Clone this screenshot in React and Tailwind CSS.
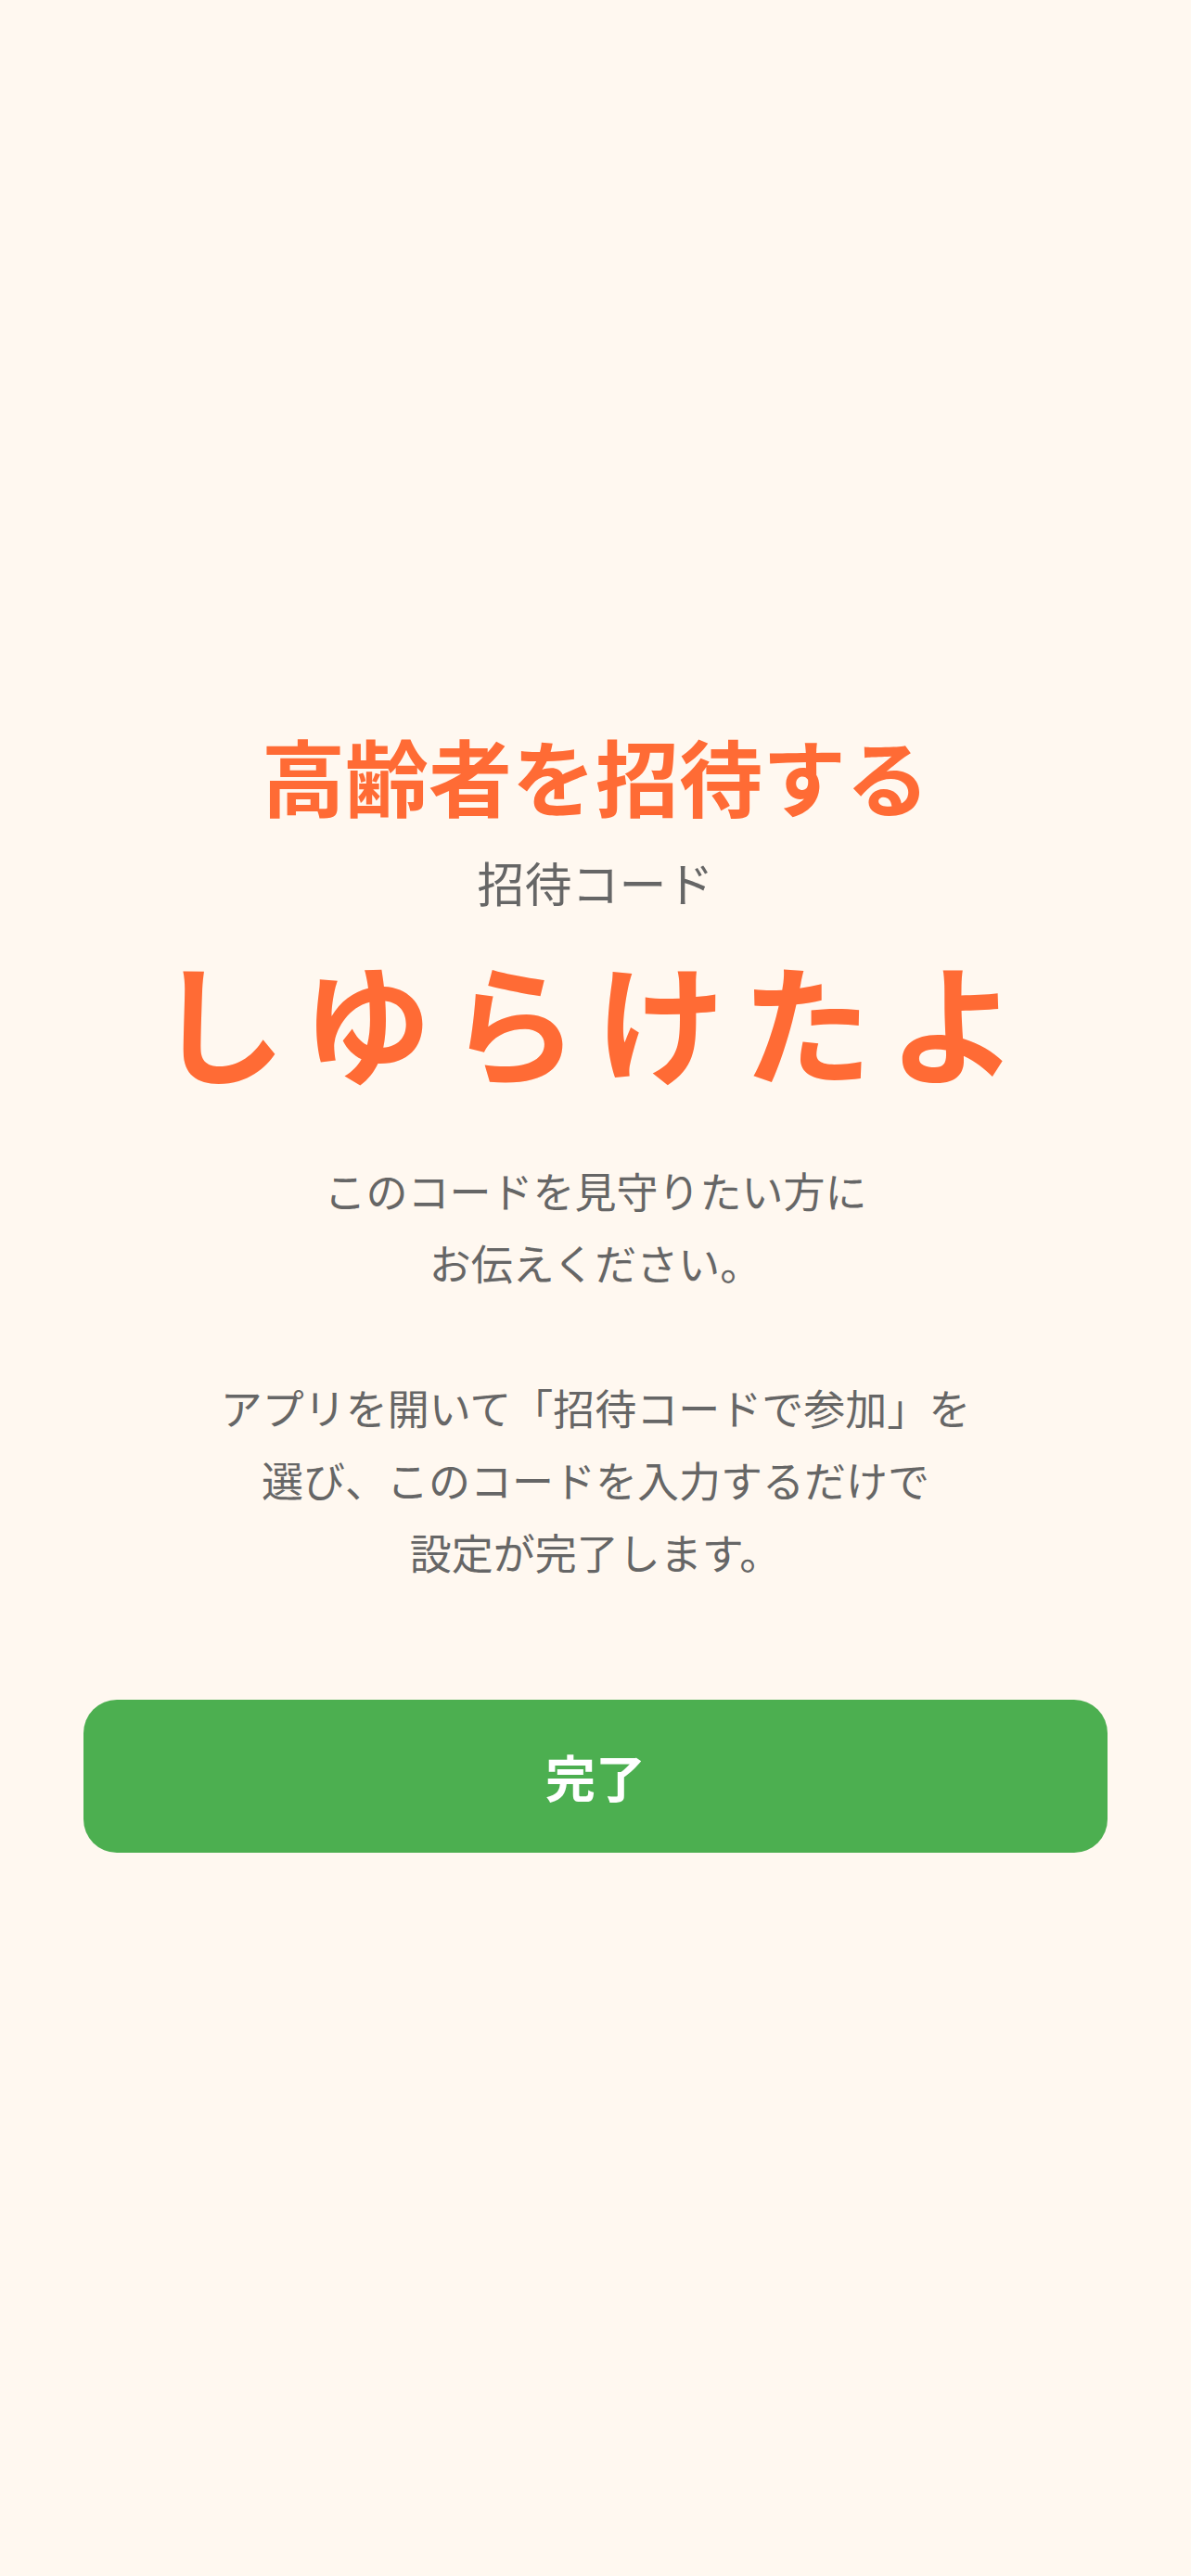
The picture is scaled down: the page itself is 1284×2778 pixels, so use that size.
import React from "react";

const jp = { fontFamily: '"Noto Sans CJK JP", "Noto Sans", sans-serif' };

function InviteCodeScreen({ code, onDone }) {
  return (
    <div
      className="flex min-h-screen w-full flex-col items-center justify-center bg-[#FFF8F0] px-[90px]"
      style={jp}
    >
      <h1 className="text-[90px] font-bold leading-[108px] text-[#FF6B35]">
        高齢者を招待する
      </h1>
      <p className="mt-[32px] text-[51px] leading-[61px] text-[#666666]">
        招待コード
      </p>
      <div className="mt-[30px] text-[140px] font-semibold leading-[173px] tracking-[18px] text-[#FF6B35]">
        {code}
      </div>
      <p className="mt-[60px] whitespace-pre-line text-center text-[45px] leading-[78px] text-[#666666]">
        {"このコードを見守りたい方に\nお伝えください。\n\nアプリを開いて「招待コードで参加」を\n選び、このコードを入力するだけで\n設定が完了します。"}
      </p>
      <button
        onClick={onDone}
        className="mt-[120px] flex h-[165px] w-full items-center justify-center rounded-[36px] bg-[#4CAF50] text-[54px] font-bold text-white"
      >
        完了
      </button>
    </div>
  );
}

export default function App() {
  return <InviteCodeScreen code="しゆらけたよ" onDone={() => {}} />;
}
